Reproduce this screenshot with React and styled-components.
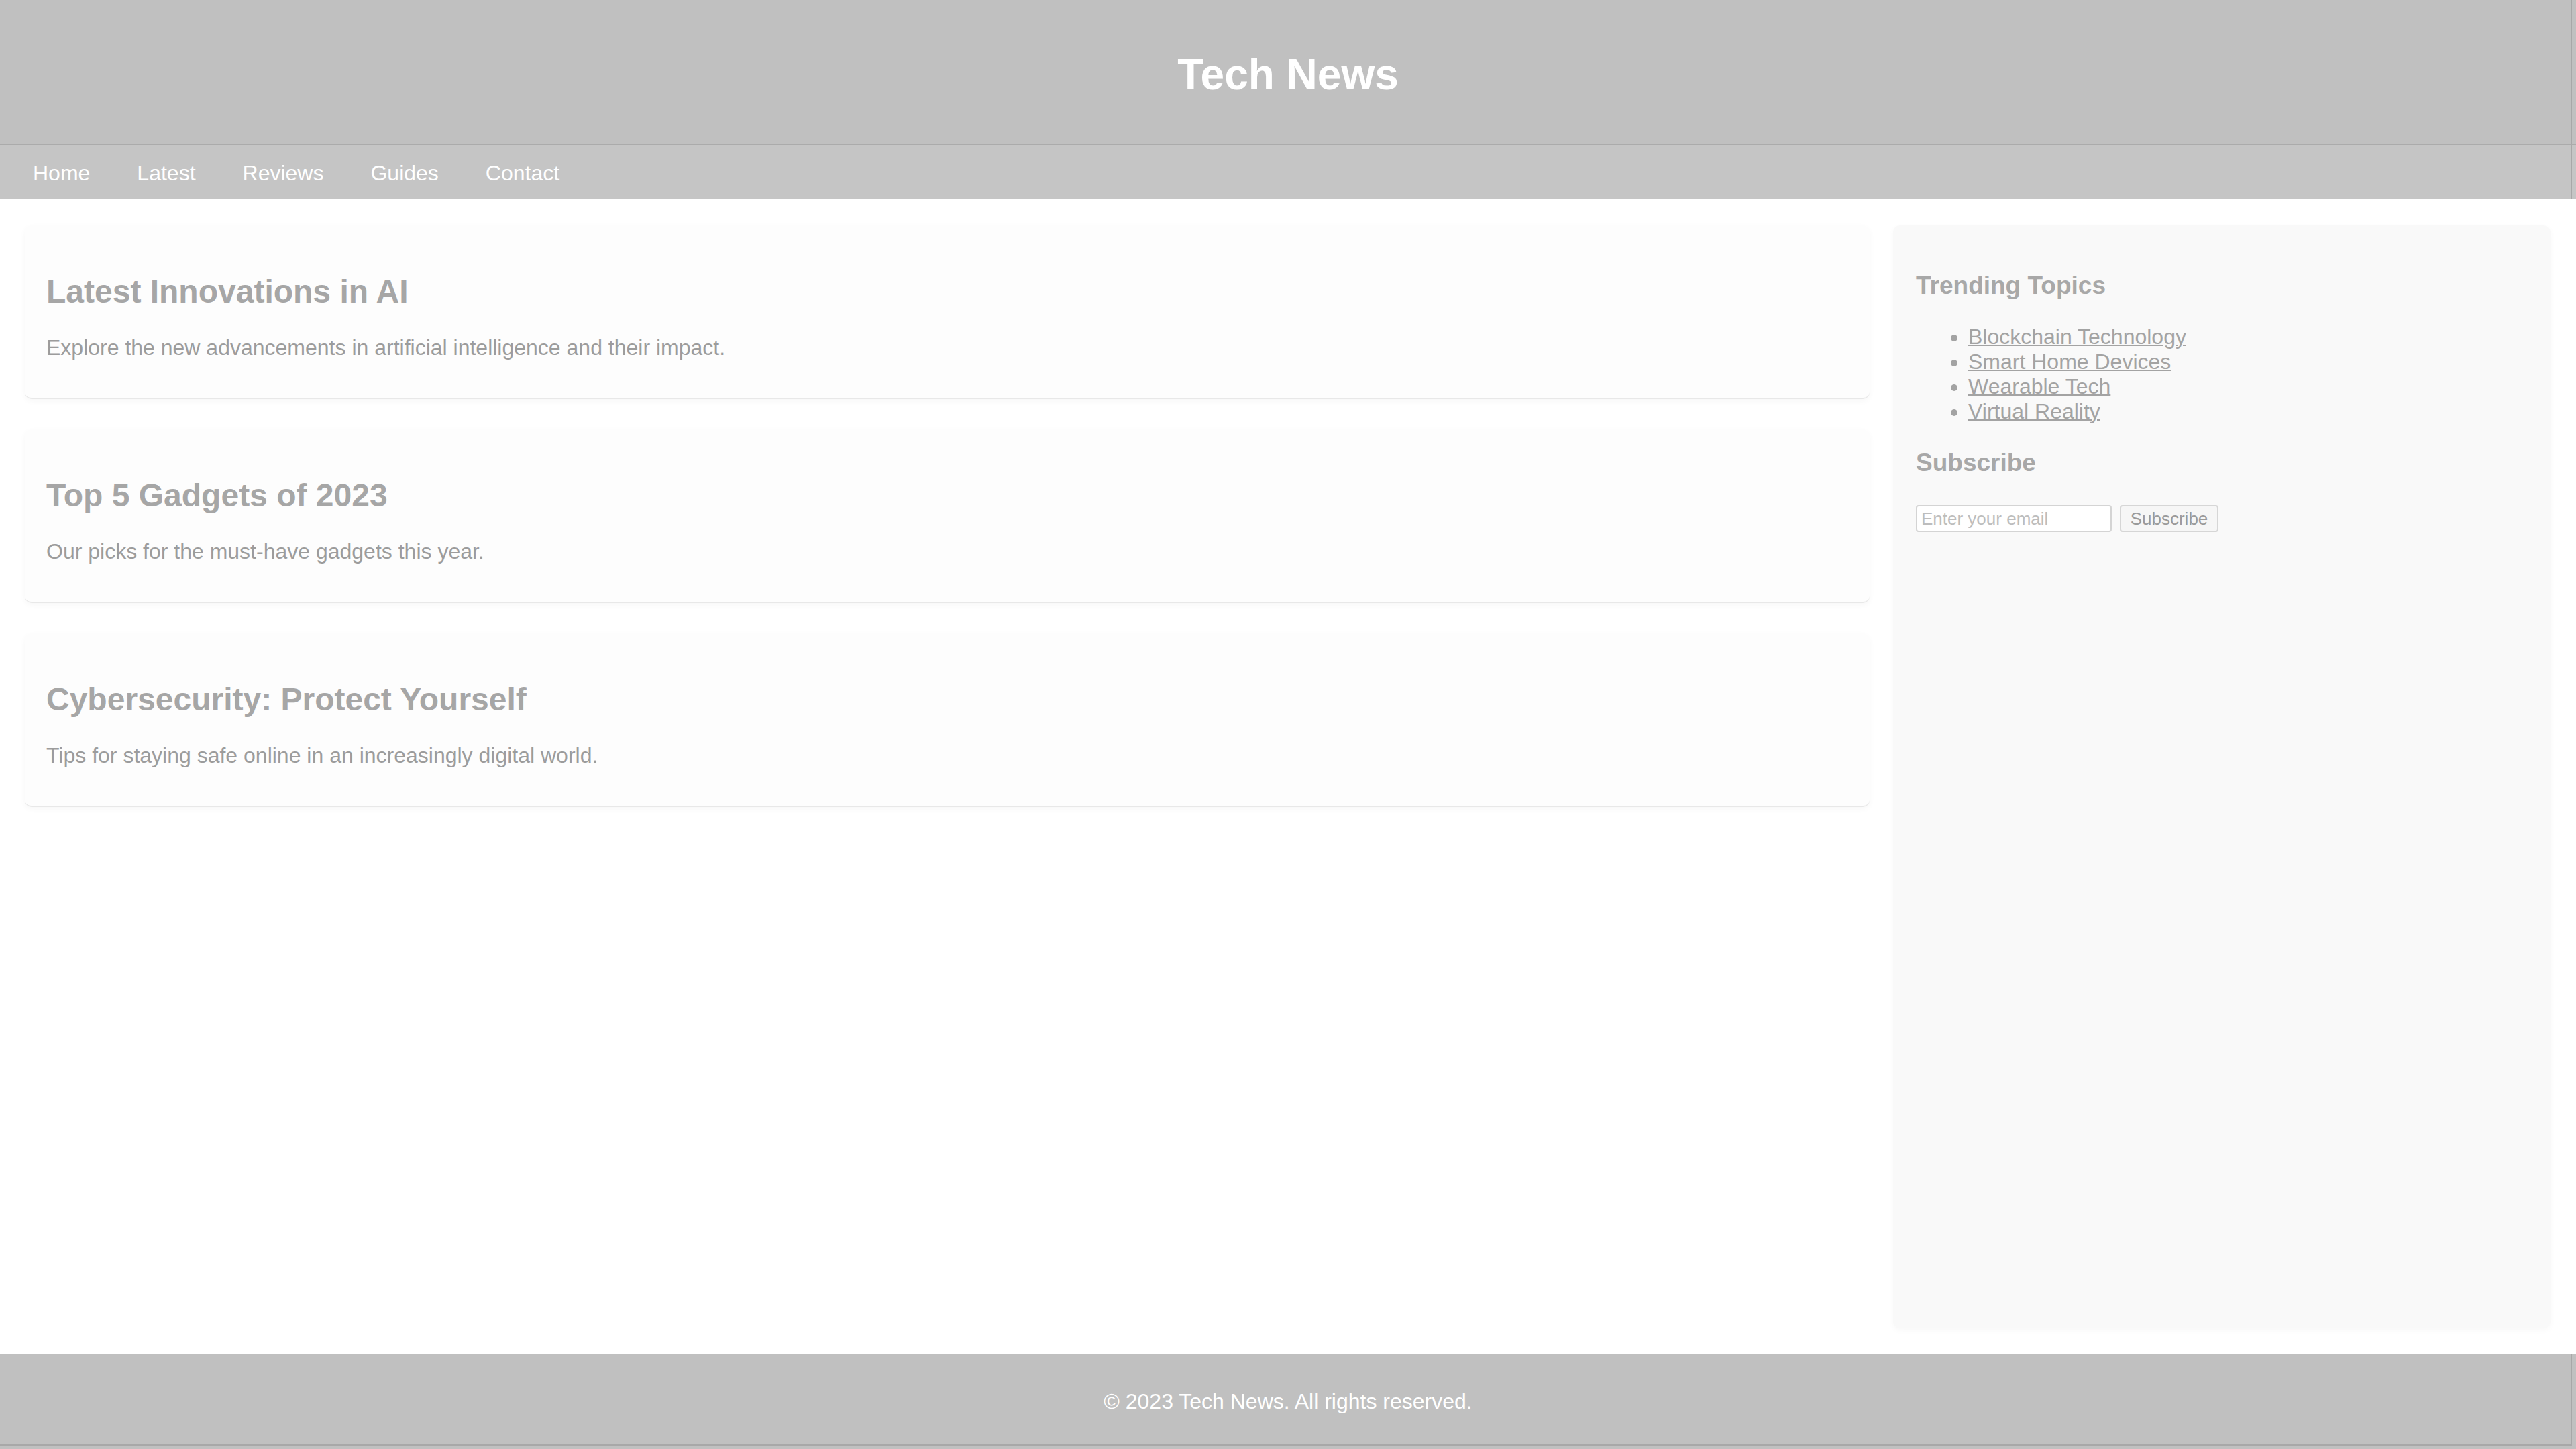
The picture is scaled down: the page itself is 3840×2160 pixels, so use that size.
import React from "react";
import styled, { createGlobalStyle } from "styled-components";

const Global = createGlobalStyle`
  html, body { margin: 0; padding: 0; background: #ffffff; }
  body { font-family: "Liberation Sans", Arial, sans-serif; }
  #root { min-height: 100vh; }
`;

const Page = styled.div`
  min-height: 100vh;
  display: flex;
  flex-direction: column;
`;

const Header = styled.header`
  height: 214px;
  background: #c0c0c0;
  border-bottom: 2px solid #ababab;
  display: flex;
  align-items: center;
  justify-content: center;
  box-shadow: inset -6px 0 0 #c0c0c0, inset -8px 0 0 #a8a8a8;
`;

const Title = styled.h1`
  margin: 8px 0 0;
  font-size: 64px;
  font-weight: 700;
  color: #ffffff;
`;

const Nav = styled.nav`
  height: 81px;
  background: #c5c5c5;
  display: flex;
  align-items: center;
  padding: 0 14px;
  box-shadow: inset -6px 0 0 #c5c5c5, inset -8px 0 0 #a8a8a8;
`;

const NavLink = styled.a`
  color: #ffffff;
  font-size: 32px;
  text-decoration: none;
  padding: 3px 35px 0;
`;

const Main = styled.main`
  flex: 1;
  display: grid;
  grid-template-columns: 1fr 980px;
  column-gap: 35px;
  padding: 39px 38px 39px 37px;
  align-items: stretch;
`;

const Articles = styled.section`
  display: flex;
  flex-direction: column;
  gap: 45px;
  align-items: stretch;
  align-self: start;
`;

const Card = styled.article`
  background: #fdfdfd;
  border-radius: 10px;
  border-bottom: 2px solid #e8e8e8;
  box-shadow: 0 3px 10px rgba(0, 0, 0, 0.035);
  padding: 32px 32px;
`;

const CardTitle = styled.h2`
  font-size: 48px;
  font-weight: 700;
  color: #a6a6a6;
  margin: 39px 0 38px;
`;

const CardText = styled.p`
  font-size: 32px;
  color: #9c9c9c;
  margin: 0 0 24px;
`;

const Sidebar = styled.aside`
  background: #f9f9f9;
  border-radius: 10px;
  box-shadow: 0 3px 10px rgba(0, 0, 0, 0.03);
  padding: 32px 34px 32px;
`;

const SideTitle = styled.h3`
  font-size: 37px;
  font-weight: 700;
  color: #a8a8a8;
  margin: 37px 0;
`;

const TopicList = styled.ul`
  margin: 32px 0;
  padding-left: 78px;
  font-size: 32px;
  color: #a3a3a3;
`;

const TopicLink = styled.a`
  color: #a3a3a3;
  text-decoration: underline;
  text-decoration-thickness: 2px;
`;

const Form = styled.form`
  display: flex;
  align-items: center;
  gap: 12px;
  margin-top: 42px;
`;

const EmailInput = styled.input`
  width: 292px;
  height: 40px;
  box-sizing: border-box;
  padding: 2px 6px;
  font-family: "Liberation Sans", Arial, sans-serif;
  font-size: 26px;
  color: #999;
  background: #ffffff;
  border: 2px solid #d4d4d4;
  border-radius: 4px;
  &::placeholder { color: #bdbdbd; }
`;

const SubmitButton = styled.button`
  height: 40px;
  width: 147px;
  box-sizing: border-box;
  font-family: "Liberation Sans", Arial, sans-serif;
  font-size: 26px;
  color: #9a9a9a;
  background: #f6f6f6;
  border: 2px solid #d6d6d6;
  border-radius: 4px;
  padding: 0 10px;
`;

const Footer = styled.footer`
  background: #c0c0c0;
  height: 141px;
  display: flex;
  align-items: center;
  justify-content: center;
  box-shadow: inset -6px -5px 0 #c0c0c0, inset -8px -7px 0 #a8a8a8;
`;

const FooterText = styled.p`
  margin: 0;
  color: #ffffff;
  font-size: 32px;
`;

const navItems = ["Home", "Latest", "Reviews", "Guides", "Contact"];

const articles = [
  {
    title: "Latest Innovations in AI",
    text: "Explore the new advancements in artificial intelligence and their impact.",
  },
  {
    title: "Top 5 Gadgets of 2023",
    text: "Our picks for the must-have gadgets this year.",
  },
  {
    title: "Cybersecurity: Protect Yourself",
    text: "Tips for staying safe online in an increasingly digital world.",
  },
];

const topics = [
  "Blockchain Technology",
  "Smart Home Devices",
  "Wearable Tech",
  "Virtual Reality",
];

export default function App() {
  return (
    <>
      <Global />
      <Page>
        <Header>
          <Title>Tech News</Title>
        </Header>
        <Nav>
          {navItems.map((n) => (
            <NavLink key={n} href="#">
              {n}
            </NavLink>
          ))}
        </Nav>
        <Main>
          <Articles>
            {articles.map((a) => (
              <Card key={a.title}>
                <CardTitle>{a.title}</CardTitle>
                <CardText>{a.text}</CardText>
              </Card>
            ))}
          </Articles>
          <Sidebar>
            <SideTitle>Trending Topics</SideTitle>
            <TopicList>
              {topics.map((t) => (
                <li key={t}>
                  <TopicLink href="#">{t}</TopicLink>
                </li>
              ))}
            </TopicList>
            <SideTitle>Subscribe</SideTitle>
            <Form onSubmit={(e) => e.preventDefault()}>
              <EmailInput type="email" placeholder="Enter your email" />
              <SubmitButton type="submit">Subscribe</SubmitButton>
            </Form>
          </Sidebar>
        </Main>
        <Footer>
          <FooterText>© 2023 Tech News. All rights reserved.</FooterText>
        </Footer>
      </Page>
    </>
  );
}
